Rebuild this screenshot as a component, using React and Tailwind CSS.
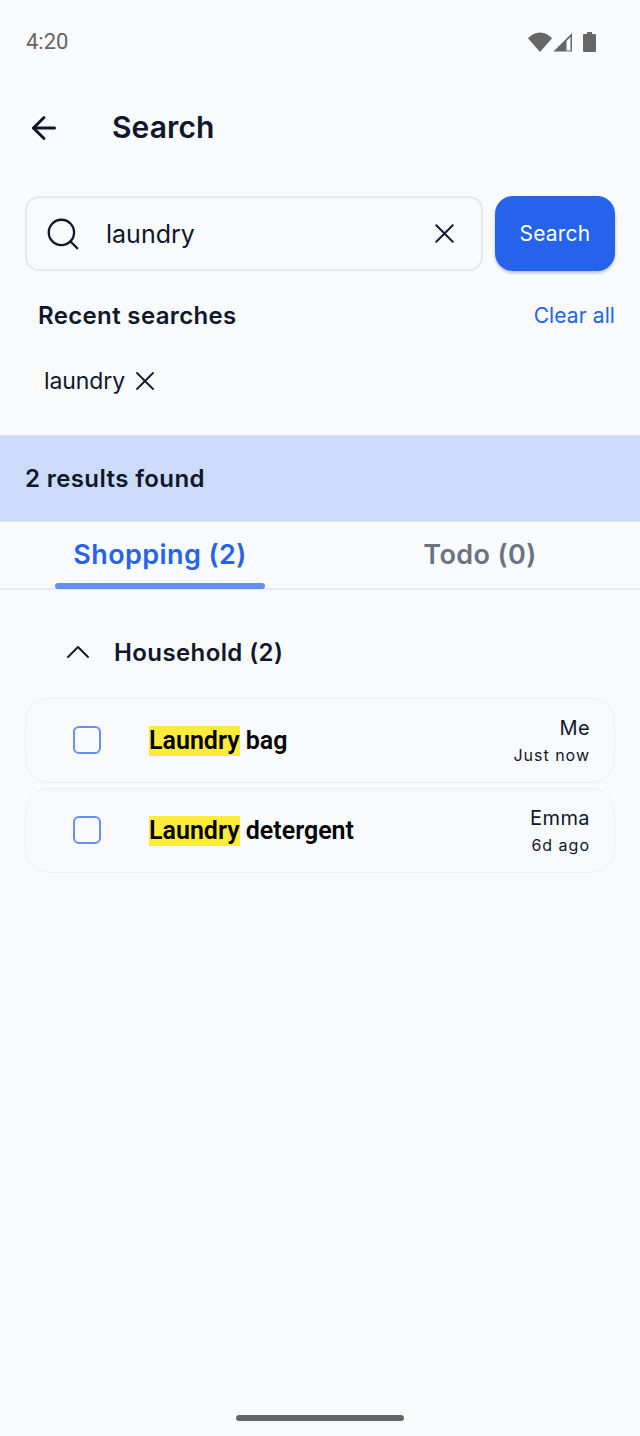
import React from 'react';
import { ArrowLeft, ChevronUp, Search, X } from 'lucide-react';

const results = [
  { id: 1, rest: ' bag', by: 'Me', when: 'Just now' },
  { id: 2, rest: ' detergent', by: 'Emma', when: '6d ago' },
];

const StatusIcons = () => (
  <div className="mt-[2px] flex items-center">
    <svg width="24" height="20" viewBox="0 0 24 20">
      <path d="M0 6.2C3.2 2.6 7.4.4 12 .4s8.8 2.2 12 5.8L12 20z" fill="#666" />
    </svg>
    <svg width="20" height="20" viewBox="0 0 20 20" className="ml-[1px]">
      <path d="M.5 19.5 19 1v18.5z" fill="#666" />
      <path d="M13.5 9v9.5h4v-13.5z" fill="#f8fafc" />
    </svg>
    <svg width="13" height="20" viewBox="0 0 13 20" className="ml-[10px]">
      <path d="M4 0h5v2h2.8c.7 0 1.2.5 1.2 1.2v15.6c0 .7-.5 1.2-1.2 1.2H1.2C.5 20 0 19.5 0 18.8V3.2C0 2.5.5 2 1.2 2H4z" fill="#666" />
    </svg>
  </div>
);

const ResultRow = ({ rest, by, when }) => (
  <div className="flex h-[85px] items-center rounded-[24px] border border-[#eceff4] pl-[47px] pr-[24px]">
    <div className="mb-[1px] h-[28px] w-[28px] rounded-[6px] border-2 border-[#6690f0]" />
    <div className="ml-[48px] flex-1 font-['Roboto'] text-[25px] font-semibold leading-[30px] text-black">
      <span className="inline-block bg-[#ffeb3b]">Laundry</span>
      <span className="whitespace-pre">{rest}</span>
    </div>
    <div className="pt-[1px] text-right text-[#0f172a]">
      <div className="text-[20px] leading-[28px] tracking-[0.4px]">{by}</div>
      <div className="text-[16px] leading-[26px] tracking-[1px]">{when}</div>
    </div>
  </div>
);

export default function App() {
  return (
    <div className="flex h-[1436px] w-[640px] flex-col overflow-hidden bg-[#f8fafc] font-['Inter',sans-serif] text-[#0f172a]">
      <div className="flex h-[82px] items-center justify-between pl-[26px] pr-[44px]">
        <span className="mt-[1px] font-['Roboto'] text-[22px] text-[#666]">4:20</span>
        <StatusIcons />
      </div>

      <div className="flex h-[90px] items-center pl-[26px]">
        <ArrowLeft size={36} strokeWidth={2} className="mt-[1px]" />
        <h1 className="ml-[50px] text-[30px] font-semibold leading-[36px] tracking-[0.1px]">Search</h1>
      </div>

      <div className="mt-[24px] flex items-stretch gap-[12px] px-[25px]">
        <div className="flex h-[75px] flex-1 items-center rounded-[14px] border-2 border-[#e5e9f0] pl-[17px] pr-[20px]">
          <Search size={38} strokeWidth={1.45} />
          <span className="ml-[24px] mt-[2px] flex-1 text-[25px]">laundry</span>
          <X size={33} strokeWidth={1.45} />
        </div>
        <button className="h-[75px] w-[120px] rounded-[18px] bg-[#2563eb] text-[21px] tracking-[0.2px] text-white shadow-[0_2px_3px_rgba(15,23,42,0.25)]">
          Search
        </button>
      </div>

      <div className="mt-[27px] flex items-center justify-between pl-[38px] pr-[25px]">
        <span className="text-[24px] font-semibold leading-[36px] tracking-[0.35px]">Recent searches</span>
        <span className="text-[21px] leading-[36px] tracking-[0.1px] text-[#2563eb]">Clear all</span>
      </div>

      <div className="mt-[29px] flex items-center pl-[44px]">
        <span className="text-[23px] leading-[36px] tracking-[-0.1px]">laundry</span>
        <X size={32} strokeWidth={1.35} className="ml-[4px]" />
      </div>

      <div className="mt-[36px] flex h-[87px] items-center border-y border-[#dbe4f5] bg-[#ccdbfa] pl-[25px]">
        <span className="text-[24px] font-semibold tracking-[0.4px]">2 results found</span>
      </div>

      <div className="relative flex h-[68px] items-center border-b-2 border-[#e8ecf2]">
        <div className="w-1/2 text-center text-[27px] font-semibold tracking-[0.4px] text-[#2563eb]">Shopping (2)</div>
        <div className="w-1/2 text-center text-[27px] font-semibold tracking-[0.4px] text-[#6b7280]">Todo (0)</div>
        <div className="absolute bottom-[-1px] left-[55px] h-[6px] w-[210px] rounded-full bg-[#6690f0]" />
      </div>

      <div className="mt-[38px] flex h-[50px] items-center pl-[58px]">
        <ChevronUp size={40} strokeWidth={1.15} className="mb-[2px]" />
        <span className="ml-[16px] text-[24px] font-semibold tracking-[0.4px]">Household (2)</span>
      </div>

      <div className="mt-[20px] flex flex-col gap-[5px] px-[25px]">
        {results.map((r) => (
          <ResultRow key={r.id} {...r} />
        ))}
      </div>

      <div className="mt-auto mb-[15px] flex justify-center">
        <div className="h-[6px] w-[168px] rounded-full bg-[#666]" />
      </div>
    </div>
  );
}
